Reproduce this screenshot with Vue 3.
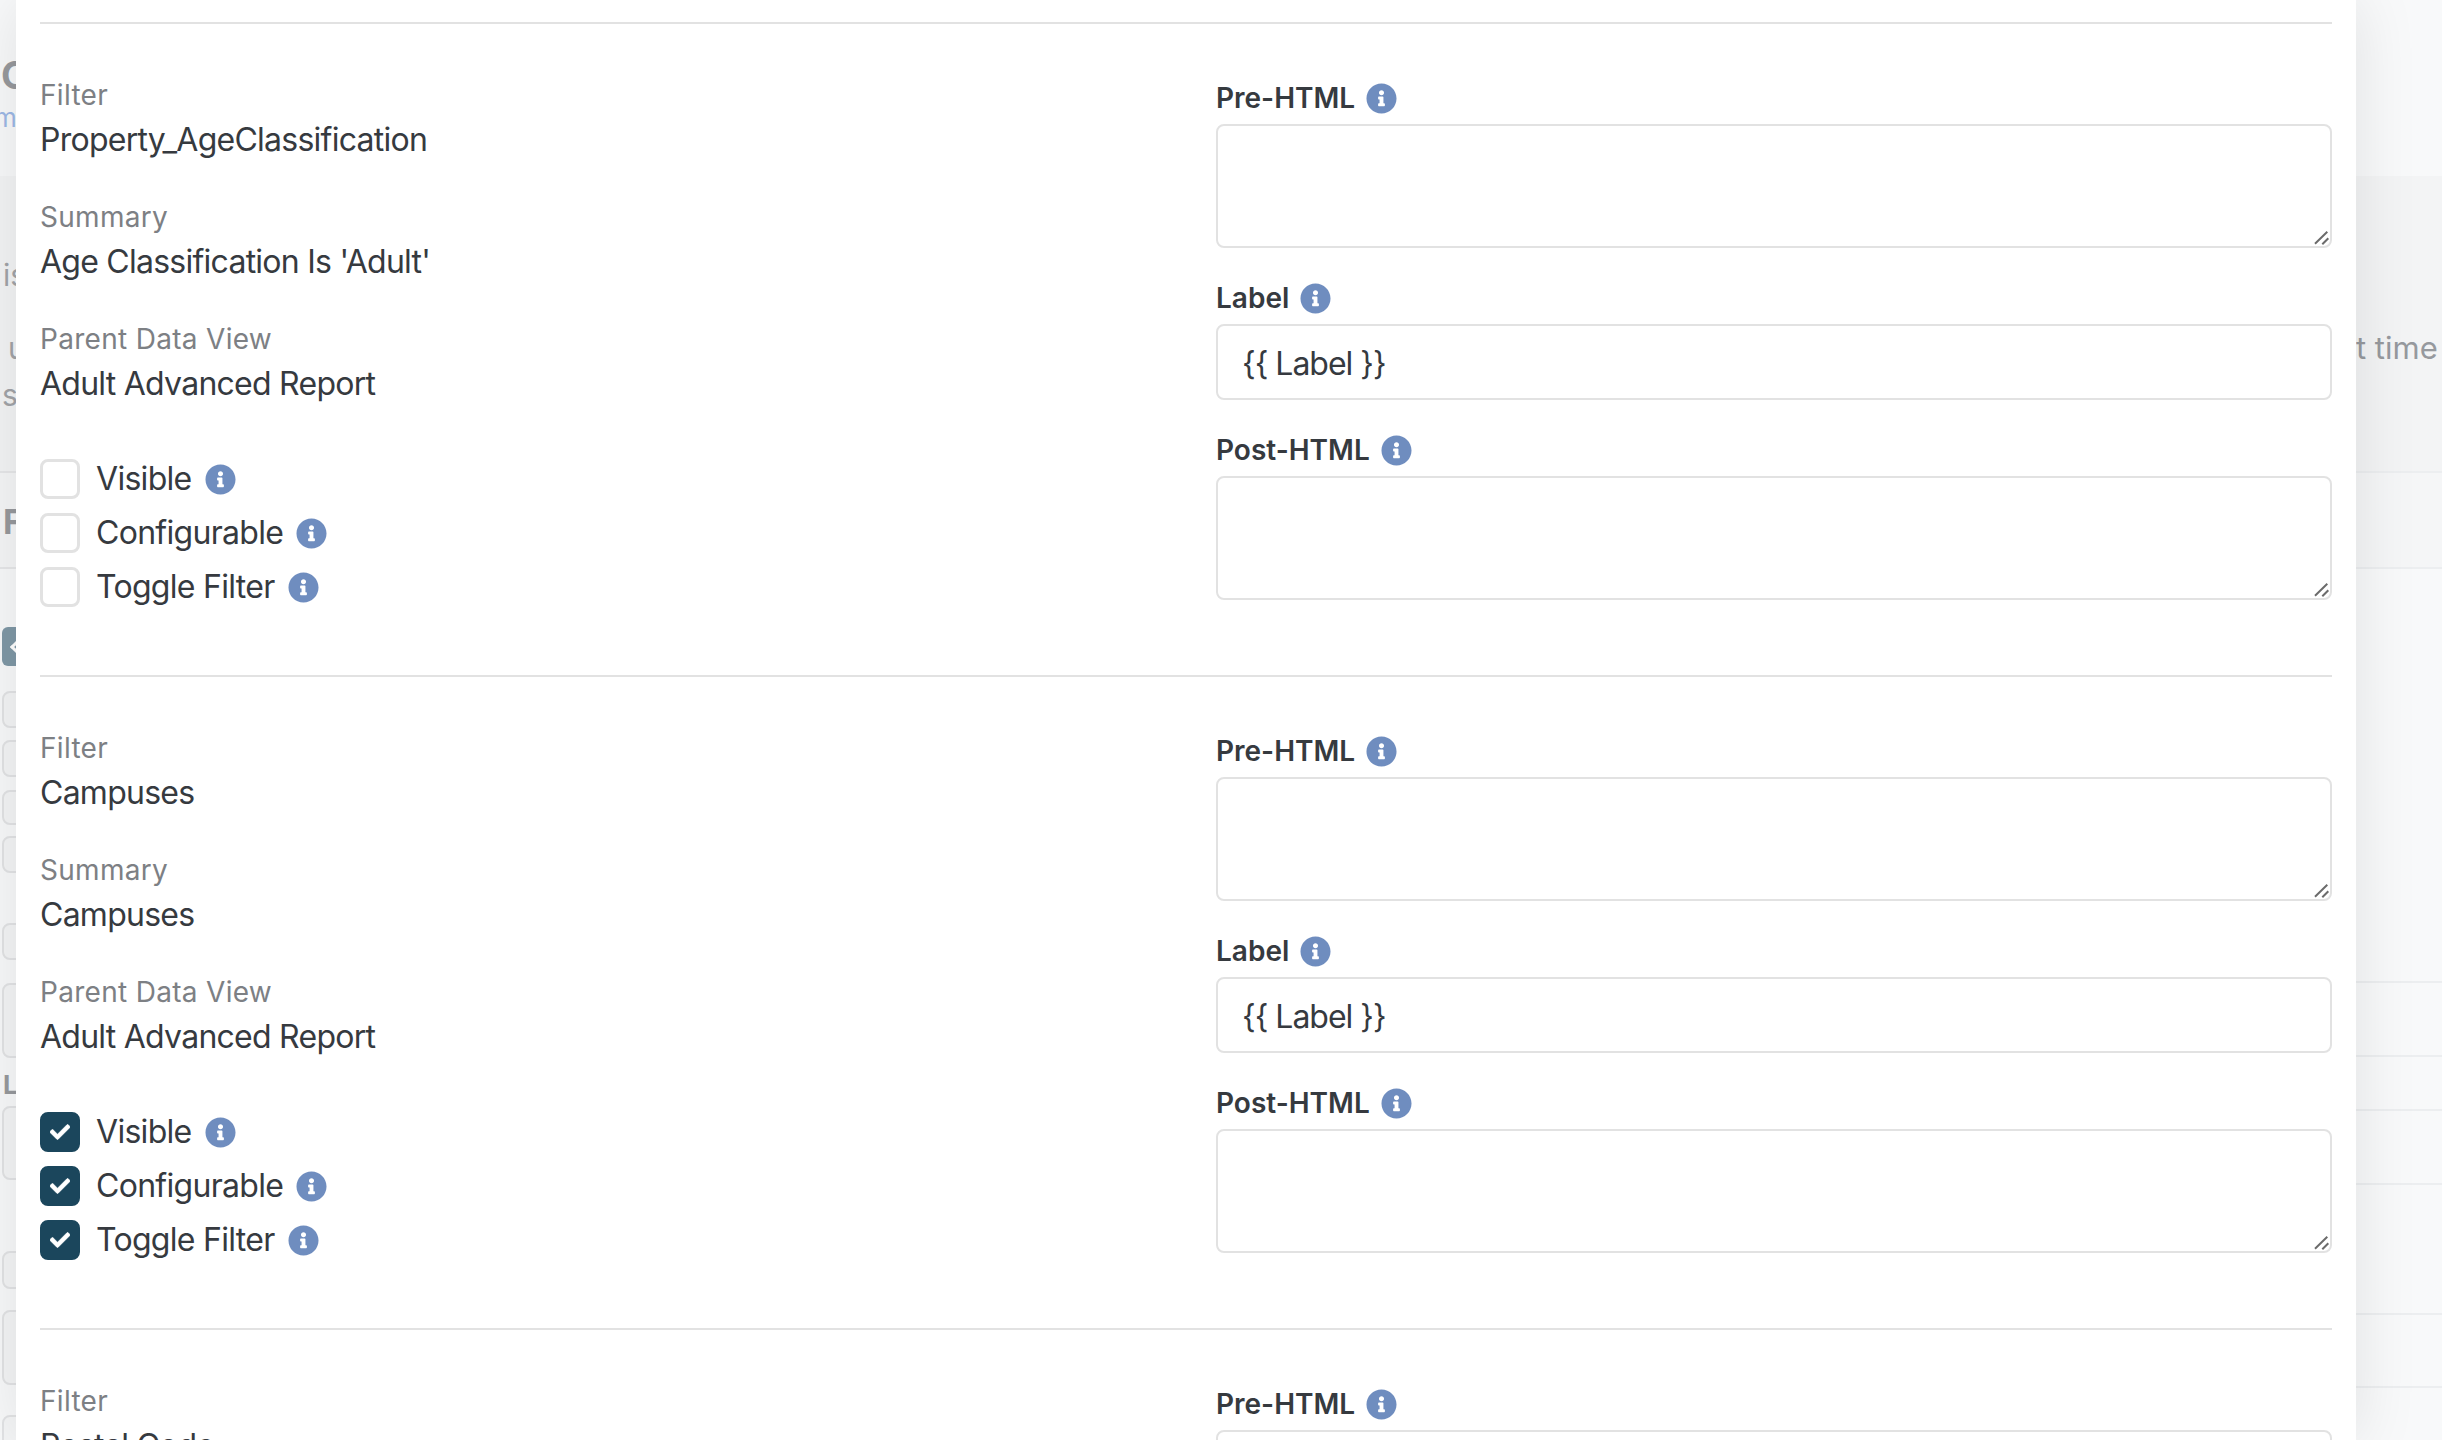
<template>
  <div class="page">
    <!-- page behind the drawer, only the left edge shows -->
    <aside class="edge edge-left">
      <div class="edge-sec sec-top">
        <div class="frag frag-c">C</div>
        <div class="frag frag-m">m</div>
      </div>
      <div class="edge-sec sec-mid">
        <div class="frag frag-is">is</div>
        <div class="frag frag-u">u</div>
        <div class="frag frag-s">s</div>
      </div>
      <div class="edge-sec sec-mid2">
        <div class="frag frag-f">F</div>
      </div>
      <div class="edge-sec sec-rest">
        <template v-for="(b, i) in leftBoxes" :key="i">
          <div v-if="b.letter" class="frag frag-l" :style="{ marginTop: b.gap + 'px' }">{{ b.letter }}</div>
          <div
            v-else
            :class="b.btn ? 'edge-btn' : 'edge-box'"
            :style="{ marginTop: b.gap + 'px', height: b.h + 'px' }"
          >
            <span v-if="b.btn" class="edge-chev"></span>
          </div>
        </template>
      </div>
    </aside>

    <main class="panel">
      <section v-for="filter in filters" :key="filter.name" class="row">
        <div class="col-left">
          <div class="field">
            <div class="field-label">Filter</div>
            <div class="field-value">{{ filter.name }}</div>
          </div>
          <div class="field">
            <div class="field-label">Summary</div>
            <div class="field-value">{{ filter.summary }}</div>
          </div>
          <div class="field">
            <div class="field-label">Parent Data View</div>
            <div class="field-value">{{ filter.parent }}</div>
          </div>

          <div class="checks">
            <div v-for="c in checks" :key="c" class="check">
              <span class="box" :class="{ checked: filter.checked }">
                <svg v-if="filter.checked" class="tick" viewBox="0 0 512 512">
                  <path fill="#fff" stroke="#fff" stroke-width="16" d="M173.898 439.404l-166.4-166.4c-9.997-9.997-9.997-26.206 0-36.204l36.203-36.204c9.997-9.998 26.207-9.998 36.204 0L192 312.69 432.095 72.596c9.997-9.997 26.207-9.997 36.204 0l36.203 36.204c9.997 9.997 9.997 26.206 0 36.204l-294.4 294.401c-9.998 9.997-26.207 9.997-36.204-.001z" />
                </svg>
              </span>
              <span class="check-text">{{ c }}</span>
              <svg class="info" viewBox="0 0 512 512">
                <path :d="infoPath" />
              </svg>
            </div>
          </div>
        </div>

        <div class="col-right">
          <label class="form-label">Pre-HTML <svg class="info" viewBox="0 0 512 512"><path :d="infoPath" /></svg></label>
          <div class="area-wrap">
            <textarea class="control area"></textarea>
            <svg class="grip" viewBox="0 0 20 20"><path d="M5 17.7L17.3 5.7M12.3 18.3L18.3 12.3" /></svg>
          </div>
          <label class="form-label">Label <svg class="info" viewBox="0 0 512 512"><path :d="infoPath" /></svg></label>
          <input class="control text" type="text" value="{{ Label }}" />
          <label class="form-label">Post-HTML <svg class="info" viewBox="0 0 512 512"><path :d="infoPath" /></svg></label>
          <div class="area-wrap">
            <textarea class="control area"></textarea>
            <svg class="grip" viewBox="0 0 20 20"><path d="M5 17.7L17.3 5.7M12.3 18.3L18.3 12.3" /></svg>
          </div>
        </div>
      </section>
    </main>

    <aside class="edge edge-right">
      <div
        v-for="(s, i) in rightSections"
        :key="i"
        class="edge-sec"
        :class="s.cls"
        :style="{ height: s.h + 'px' }"
      >
        <div v-if="s.text" class="frag-time">{{ s.text }}</div>
      </div>
    </aside>
  </div>
</template>

<script setup>
const infoPath = 'M256 8C119.043 8 8 119.083 8 256c0 136.997 111.043 248 248 248s248-111.003 248-248C504 119.083 392.957 8 256 8zm0 110c23.196 0 42 18.804 42 42s-18.804 42-42 42-42-18.804-42-42 18.804-42 42-42zm56 254c0 6.627-5.373 12-12 12h-88c-6.627 0-12-5.373-12-12v-24c0-6.627 5.373-12 12-12h12v-64h-12c-6.627 0-12-5.373-12-12v-24c0-6.627 5.373-12 12-12h64c6.627 0 12 5.373 12 12v100h12c6.627 0 12 5.373 12 12v24z'

const checks = ['Visible', 'Configurable', 'Toggle Filter']

const filters = [
  { name: 'Property_AgeClassification', summary: "Age Classification Is 'Adult'", parent: 'Adult Advanced Report', checked: false },
  { name: 'Campuses', summary: 'Campuses', parent: 'Adult Advanced Report', checked: true },
  { name: 'Postal Code', summary: 'Postal Code', parent: 'Adult Advanced Report', checked: false }
]

const leftBoxes = [
  { btn: true, gap: 58, h: 39 },
  { gap: 25, h: 37 },
  { gap: 12, h: 37 },
  { gap: 13, h: 35 },
  { gap: 11, h: 37 },
  { gap: 50, h: 37 },
  { gap: 23, h: 75 },
  { letter: 'L', gap: 12 },
  { gap: 6, h: 74 },
  { gap: 71, h: 38 },
  { gap: 21, h: 75 },
  { gap: 30, h: 60 }
]

const rightSections = [
  { h: 176, cls: 'sec-top' },
  { h: 297, cls: 'sec-mid line', text: 't time' },
  { h: 96, cls: 'sec-mid2 line' },
  { h: 414, cls: 'sec-rest line' },
  { h: 74, cls: 'sec-rest line' },
  { h: 54, cls: 'sec-rest line' },
  { h: 74, cls: 'sec-rest line' },
  { h: 130, cls: 'sec-rest line' },
  { h: 73, cls: 'sec-rest line' },
  { h: 52, cls: 'sec-rest' }
]
</script>

<style>
html, body {
  margin: 0;
  overflow: hidden;
}
</style>

<style scoped>
.page {
  display: flex;
  width: 2442px;
  height: 1440px;
  overflow: hidden;
  font-family: Inter, "Liberation Sans", sans-serif;
  color: #363a3f;
}

.edge {
  display: flex;
  flex-direction: column;
  overflow: hidden;
}
.edge-left { width: 16px; flex: none; }
.edge-right { width: 86px; flex: none; }
.edge-sec { box-sizing: border-box; flex: none; }
.sec-top { background: #f8f9fa; }
.sec-mid { background: #f3f4f5; }
.sec-mid2 { background: #f5f6f7; }
.sec-rest { background: #f8f9fa; }
.line { border-bottom: 2px solid #eceef0; }

.edge-left .sec-top { height: 176px; padding-top: 55px; }
.edge-left .sec-mid { height: 297px; padding-top: 81px; border-bottom: 2px solid #e6e7e9; }
.edge-left .sec-mid2 { height: 96px; padding-top: 31px; border-bottom: 2px solid #e6e7e9; }
.edge-left .sec-rest { height: 871px; }

.frag {
  white-space: nowrap;
  color: #a2a4a8;
}
.frag-c { font-size: 38px; font-weight: 700; line-height: 40px; padding-left: 1px; color: #97999d; }
.frag-m { font-size: 26px; line-height: 30px; margin-top: 8px; color: #9db8e6; margin-left: -6px; }
.frag-is { font-size: 30px; line-height: 36px; padding-left: 3px; }
.frag-u { font-size: 30px; line-height: 36px; margin-top: 37px; padding-left: 8px; }
.frag-s { font-size: 30px; line-height: 36px; margin-top: 11px; padding-left: 2px; }
.frag-f { font-size: 34px; font-weight: 700; line-height: 36px; padding-left: 3px; color: #97999d; }
.frag-l { font-size: 26px; font-weight: 700; line-height: 30px; padding-left: 3px; color: #97999d; }

.edge-btn {
  box-sizing: border-box;
  width: 40px;
  margin-left: 2px;
  border-radius: 6px;
  background: #7f98a6;
  display: flex;
  align-items: center;
}
.edge-chev {
  width: 7px;
  height: 7px;
  margin-left: 10px;
  border-left: 3px solid #fff;
  border-bottom: 3px solid #fff;
  transform: rotate(45deg);
}
.edge-box {
  box-sizing: border-box;
  width: 40px;
  margin-left: 2px;
  border: 2px solid #e2e3e5;
  border-radius: 8px;
  background: #f4f5f6;
}

.frag-time {
  font-size: 31px;
  line-height: 40px;
  margin-top: 152px;
  color: #96999e;
  white-space: nowrap;
}

.panel {
  position: relative;
  z-index: 1;
  flex: 1;
  box-sizing: border-box;
  padding: 22px 24px 0;
  background: #fff;
  box-shadow: 0 0 60px rgba(0, 0, 0, 0.1);
  overflow: hidden;
}

.row {
  box-sizing: border-box;
  height: 653px;
  border-top: 2px solid #e2e2e2;
  padding-top: 50px;
  display: grid;
  grid-template-columns: 1fr 1116px;
}

.col-left { padding-top: 1px; }
.field { margin-bottom: 32px; }
.field-label {
  font-size: 28px;
  line-height: 40px;
  letter-spacing: 0.3px;
  color: #7d8084;
}
.field-value {
  font-size: 32px;
  line-height: 50px;
  letter-spacing: -0.75px;
  color: #363a3f;
}

.checks {
  margin-top: 50px;
  display: flex;
  flex-direction: column;
  gap: 14px;
}
.check {
  display: flex;
  align-items: center;
  height: 40px;
}
.box {
  box-sizing: border-box;
  width: 40px;
  height: 40px;
  border: 3px solid #e2e2e2;
  border-radius: 8px;
  display: flex;
  align-items: center;
  justify-content: center;
  background: #fff;
}
.box.checked {
  background: #1b465c;
  border-color: #1b465c;
}
.tick { width: 20px; height: 20px; }
.check-text {
  font-size: 32px;
  line-height: 40px;
  letter-spacing: -0.7px;
  margin-left: 16px;
  margin-right: 13px;
}

.info {
  width: 31px;
  height: 31px;
  fill: #6f8dbf;
  flex: none;
}

.col-right {
  display: flex;
  flex-direction: column;
  padding-top: 4px;
}
.form-label {
  display: flex;
  align-items: center;
  gap: 11px;
  font-size: 28px;
  font-weight: 600;
  line-height: 40px;
  margin-bottom: 6px;
  color: #363a3f;
}
.control {
  box-sizing: border-box;
  display: block;
  width: 100%;
  border: 2px solid #e2e2e2;
  border-radius: 8px;
  background: #fff;
  font-family: inherit;
  font-size: 32px;
  letter-spacing: -1px;
  color: #363a3f;
  outline: none;
  margin: 0;
}
.area-wrap {
  position: relative;
  margin-bottom: 30px;
}
.area { height: 124px; resize: none; }
.text { height: 76px; padding: 2px 24px 0; margin-bottom: 30px; }
.grip {
  position: absolute;
  right: 2px;
  bottom: 2px;
  width: 20px;
  height: 20px;
  fill: none;
  stroke: #6b6b6b;
  stroke-width: 2;
}
</style>
